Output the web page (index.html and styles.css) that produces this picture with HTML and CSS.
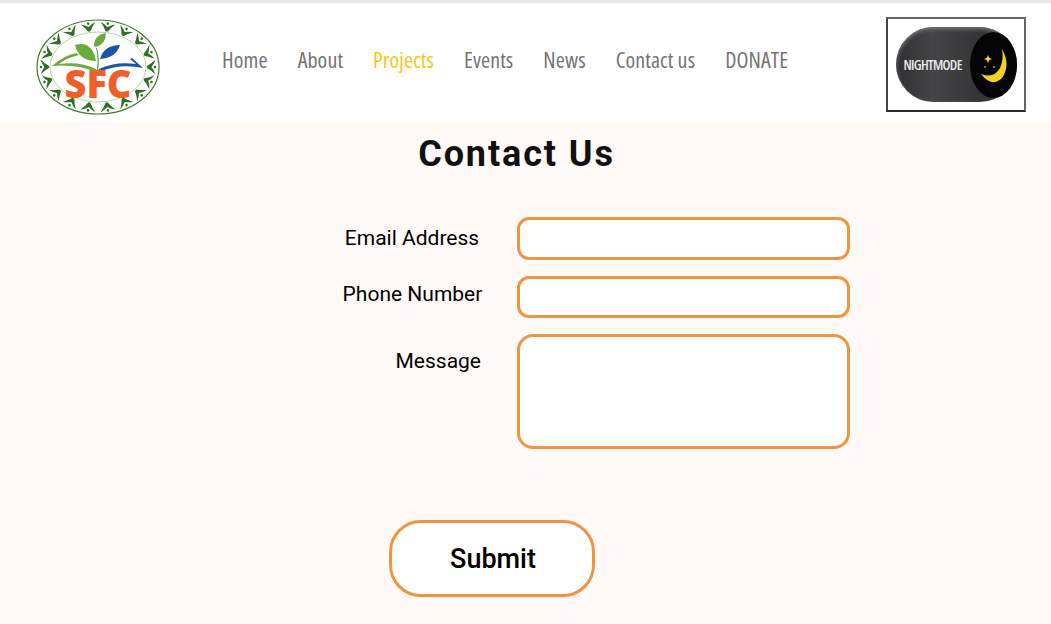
FILE: index.html
```html
<!DOCTYPE html>
<html lang="en">
<head>
  <meta charset="UTF-8">
  <meta name="viewport" content="width=device-width, initial-scale=1.0">
  <title>Contact Us</title>
  <link rel="stylesheet" href="styles.css">
</head>
<body>
  <header class="site-header">
    <svg class="logo" viewBox="0 0 124 98" aria-label="SFC logo">
      <defs>
        <g id="fig">
          <path d="M-7.5 -3.5 Q-3 -2 0 0.5 Q3 -2 7.5 -3.5 Q3.5 0.5 1 5 L-1 5 Q-3.5 0.5 -7.5 -3.5 Z" fill="#2f6e24"/>
          <circle cx="0" cy="-3" r="1.3" fill="#2f6e24"/>
        </g>
      </defs>
      <ellipse cx="62" cy="49" rx="61" ry="47" fill="#fff" stroke="#3c7a2a" stroke-width="1.2"/>
      <ellipse cx="62" cy="49" rx="48" ry="35" fill="none" stroke="#9dbf8f" stroke-width="0.7"/>
      <use href="#fig" transform="translate(116 49) rotate(90)"/>
      <use href="#fig" transform="translate(112.7 63) rotate(110)"/>
      <use href="#fig" transform="translate(103.4 75.4) rotate(130)"/>
      <use href="#fig" transform="translate(89 84.5) rotate(150)"/>
      <use href="#fig" transform="translate(71.4 89.4) rotate(170)"/>
      <use href="#fig" transform="translate(52.6 89.4) rotate(190)"/>
      <use href="#fig" transform="translate(35 84.5) rotate(210)"/>
      <use href="#fig" transform="translate(20.6 75.4) rotate(230)"/>
      <use href="#fig" transform="translate(11.3 63) rotate(250)"/>
      <use href="#fig" transform="translate(8 49) rotate(270)"/>
      <use href="#fig" transform="translate(11.3 35) rotate(290)"/>
      <use href="#fig" transform="translate(20.6 22.6) rotate(310)"/>
      <use href="#fig" transform="translate(35 13.5) rotate(330)"/>
      <use href="#fig" transform="translate(52.6 8.6) rotate(350)"/>
      <use href="#fig" transform="translate(71.4 8.6) rotate(10)"/>
      <use href="#fig" transform="translate(89 13.5) rotate(30)"/>
      <use href="#fig" transform="translate(103.4 22.6) rotate(50)"/>
      <use href="#fig" transform="translate(112.7 35) rotate(70)"/>
      <path d="M16 48 Q28 37 41 35 L43 37 Q30 40 23 46 Q44 43 60 51 L60 54 Q40 46 16 48 Z" fill="#6aad43"/>
      <path d="M63 54 Q84 45 107 50 L96 40 L94 41 L100 46 Q80 43 63 51 Z" fill="#1b55a8"/>
      <path d="M39 27 Q56 22 60 43 Q43 43 39 27 Z" fill="#69ac3c"/>
      <path d="M64 41 Q68 27 84 27 Q80 40 64 41 Z" fill="#1b55a8"/>
      <path d="M58 28 Q58 17 70 15 Q70 26 60 29 Z" fill="#69ac3c"/>
      <path d="M60 30 Q63 42 60.5 53 L62 53 Q64 42 61 30 Z" fill="#5b9e36"/>
      <text class="logo-text" x="62" y="80" text-anchor="middle">SFC</text>
    </svg>

    <nav class="main-nav">
      <a href="#">Home</a>
      <a href="#">About</a>
      <a href="#" class="active">Projects</a>
      <a href="#">Events</a>
      <a href="#">News</a>
      <a href="#">Contact us</a>
      <a href="#">DONATE</a>
    </nav>

    <button class="night-toggle" type="button">
      <span class="night-pill">
        <span class="night-label">NIGHTMODE</span>
        <span class="night-knob">
          <svg viewBox="0 0 47 66" width="47" height="66">
            <path d="M32 17 Q41 33 32 46 Q22 56 11 42 Q24 47 30 36 Q34 27 32 17 Z" fill="#f5d01e"/>
            <path d="M18 23 l1.2 2.8 l2.8 1.2 l-2.8 1.2 l-1.2 2.8 l-1.2 -2.8 l-2.8 -1.2 l2.8 -1.2 z" fill="#f5d01e"/>
            <circle cx="15" cy="35" r="0.9" fill="#b59a1c"/>
            <circle cx="24" cy="35" r="1.1" fill="#b59a1c"/>
          </svg>
        </span>
      </span>
    </button>
  </header>

  <main class="contact">
    <h1>Contact Us</h1>
    <form class="contact-form">
      <label for="email" class="label-email">Email Address</label>
      <input id="email" type="text">
      <label for="phone" class="label-phone">Phone Number</label>
      <input id="phone" type="text">
      <label for="message" class="label-message">Message</label>
      <textarea id="message"></textarea>
      <button class="submit-btn" type="button">Submit</button>
    </form>
  </main>
</body>
</html>
```
FILE: styles.css
```css
html, body {
  height: 100%;
}
body {
  margin: 0;
  background: #fff9f7;
  font-family: 'Roboto', sans-serif;
  color: #000;
  overflow: hidden;
}
.site-header {
  display: flex;
  align-items: center;
  height: 118px;
  border-top: 3px solid #e6e6e6;
  background: #fff;
  padding: 0 25px 0 36px;
}
.logo {
  width: 124px;
  height: 98px;
  flex: none;
  margin-top: 9px;
}
.logo-text {
  font-family: 'Open Sans', sans-serif;
  font-weight: 800;
  font-size: 38px;
  fill: #ee5f2a;
}
.main-nav {
  display: flex;
  gap: 30px;
  margin-left: 62px;
  margin-top: -7px;
  flex: 1;
}
.main-nav a {
  font-family: 'Open Sans', sans-serif;
  font-size: 22px;
  color: #747474;
  text-decoration: none;
  font-stretch: 78%;
  letter-spacing: 0.1px;
}
.main-nav a.active {
  color: #fcc419;
}
.night-toggle {
  width: 140px;
  height: 95px;
  margin-top: 5px;
  padding: 0;
  box-sizing: border-box;
  border: 2px solid #666;
  border-bottom-color: #2e2e2e;
  border-left-color: #444;
  background: #fff;
  display: flex;
  align-items: center;
  justify-content: center;
}
.night-pill {
  display: flex;
  align-items: center;
  justify-content: space-between;
  flex: none;
  width: 121px;
  height: 75px;
  box-sizing: border-box;
  border-radius: 38px;
  background: linear-gradient(90deg, #2f2f31, #454547 30%, #343436 70%);
  box-shadow: inset 0 2px 4px #77777a;
  padding-left: 8px;
}
.night-label {
  font-family: 'Open Sans', sans-serif;
  font-stretch: 75%;
  font-size: 14px;
  font-weight: 600;
  color: #e8e8e8;
  letter-spacing: -0.7px;
  white-space: nowrap;
}
.night-knob {
  flex: none;
  width: 47px;
  height: 66px;
  border-radius: 50%;
  background: #050505;
  display: flex;
  align-items: center;
  justify-content: center;
}
.contact h1 {
  margin: 12px 0 0;
  padding-right: 18px;
  text-align: center;
  font-size: 36px;
  line-height: 42px;
  font-weight: 700;
  letter-spacing: 1.9px;
  color: #111;
}
.contact-form {
  display: grid;
  grid-template-columns: 146px 333px;
  grid-template-rows: 43px 42px 115px;
  row-gap: 16px;
  column-gap: 31px;
  margin: 42px 0 0 339px;
}
.contact-form label {
  font-size: 21px;
  text-align: center;
  padding-top: 9px;
}
.contact-form .label-phone {
  padding: 6px 0 0 1px;
}
.contact-form .label-message {
  text-align: right;
  padding: 15px 4px 0 0;
}
.contact-form input,
.contact-form textarea {
  box-sizing: border-box;
  width: 100%;
  height: 100%;
  margin: 0 0 0 1px;
  border: 3px solid #ef9440;
  border-radius: 12px;
  background: #fff;
  outline: none;
  resize: none;
}
.contact-form textarea {
  border-radius: 16px;
}
.submit-btn {
  grid-column: 1 / span 2;
  justify-self: start;
  width: 206px;
  height: 77px;
  margin: 55px 0 0 50px;
  padding-left: 8px;
  box-sizing: border-box;
  border: 3px solid #ef9440;
  border-radius: 32px;
  background: #fff;
  font-family: 'Roboto', sans-serif;
  font-size: 27px;
  font-weight: 500;
  color: #000;
}
```
